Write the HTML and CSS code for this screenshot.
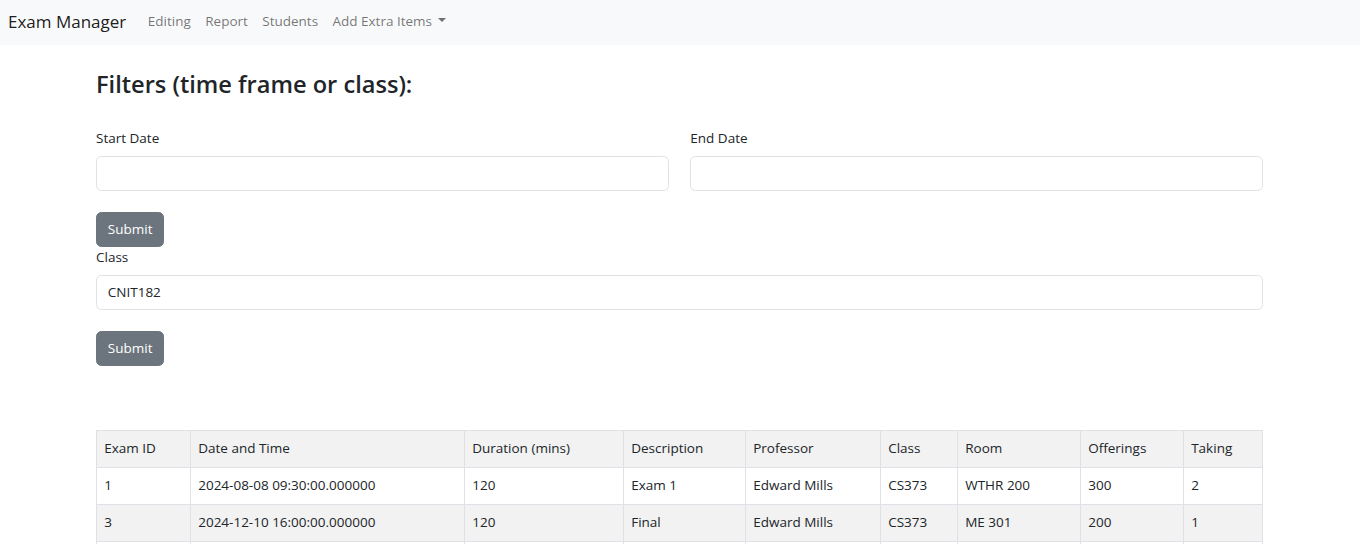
FILE: index.html
```html
<!DOCTYPE html>
<html lang="en">
<head>
<meta charset="utf-8">
<title>Exam Manager</title>
<link rel="stylesheet" href="styles.css">
</head>
<body>
<nav class="navbar">
  <a class="brand" href="#">Exam Manager</a>
  <ul class="nav">
    <li><a class="nav-link" href="#">Editing</a></li>
    <li><a class="nav-link" href="#">Report</a></li>
    <li><a class="nav-link" href="#">Students</a></li>
    <li><a class="nav-link dropdown" href="#">Add Extra Items<span class="caret"></span></a></li>
  </ul>
</nav>
<main class="container">
  <h3 class="title">Filters (time frame or class):</h3>
  <form class="form">
    <div class="row">
      <div class="field">
        <label class="label">Start Date</label>
        <input class="input" type="text">
      </div>
      <div class="field">
        <label class="label">End Date</label>
        <input class="input" type="text">
      </div>
    </div>
    <button class="btn" type="button">Submit</button>
  </form>
  <form class="form">
    <div class="field">
      <label class="label">Class</label>
      <input class="input" type="text" value="CNIT182">
    </div>
    <button class="btn" type="button">Submit</button>
  </form>
  <table class="table">
    <thead>
      <tr>
        <th class="c1">Exam ID</th>
        <th class="c2">Date and Time</th>
        <th class="c3">Duration (mins)</th>
        <th class="c4">Description</th>
        <th class="c5">Professor</th>
        <th class="c6">Class</th>
        <th class="c7">Room</th>
        <th class="c8">Offerings</th>
        <th class="c9">Taking</th>
      </tr>
    </thead>
    <tbody>
      <tr>
        <td>1</td><td>2024-08-08 09:30:00.000000</td><td>120</td><td>Exam 1</td><td>Edward Mills</td><td>CS373</td><td>WTHR 200</td><td>300</td><td>2</td>
      </tr>
      <tr class="stripe">
        <td>3</td><td>2024-12-10 16:00:00.000000</td><td>120</td><td>Final</td><td>Edward Mills</td><td>CS373</td><td>ME 301</td><td>200</td><td>1</td>
      </tr>
      <tr class="empty">
        <td></td><td></td><td></td><td></td><td></td><td></td><td></td><td></td><td></td>
      </tr>
    </tbody>
  </table>
</main>
</body>
</html>
```

FILE: styles.css
```css
* { box-sizing: border-box; }
html, body { margin: 0; padding: 0; }
body {
  font-family: "Open Sans", "Noto Sans", sans-serif;
  font-size: 13.5px;
  line-height: 21.6px;
  color: #212529;
  background: #fff;
}
.navbar {
  display: flex;
  align-items: center;
  height: 45px;
  padding: 0 8px 2px;
  background: #f8f9fa;
}
.brand {
  font-size: 17px;
  color: rgba(0,0,0,.9);
  text-decoration: none;
  margin-right: 14.4px;
  line-height: 27px;
}
.nav {
  display: flex;
  list-style: none;
  margin: 0;
  padding: 0;
}
.nav-link {
  display: block;
  padding: 7.2px 7.2px;
  color: rgba(0,0,0,.55);
  text-decoration: none;
}
.caret {
  display: inline-block;
  margin-left: 6px;
  vertical-align: 3.5px;
  border-top: 4.3px solid;
  border-right: 4.3px solid transparent;
  border-left: 4.3px solid transparent;
}
.container {
  max-width: 1188px;
  margin: 0 auto;
  padding: 24px 11px 0 10px;
}
.title {
  margin: 0 0 28.5px;
  font-size: 23.6px;
  font-weight: 600;
  line-height: 30.2px;
}
.row {
  display: grid;
  grid-template-columns: 1fr 1fr;
  column-gap: 21.6px;
}
.field { display: flex; flex-direction: column; margin-bottom: 21.6px; }
.label { margin-bottom: 7px; }
.input {
  font: inherit;
  color: #212529;
  height: 34.4px;
  padding: 5.4px 10.8px;
  border: 1px solid #dee2e6;
  border-radius: 5.4px;
  background: #fff;
}
.btn {
  display: block;
  font: inherit;
  color: #fff;
  background: #6c757d;
  border: 1px solid #6c757d;
  border-radius: 5.4px;
  padding: 5.4px 10.8px;
  line-height: 21.6px;
}
.table {
  margin-top: 64.5px;
  width: 100%;
  border-collapse: collapse;
}
.table th, .table td {
  border: 1px solid #dee2e6;
  padding: 7.2px 7.2px;
  text-align: left;
  font-weight: 400;
  white-space: nowrap;
}
.table thead th { background: #f2f2f2; }
.table .stripe td { background: #f2f2f2; }
.table .empty td { height: 37px; }
.c1 { width: 94px; }
.c2 { width: 274px; }
.c3 { width: 159px; }
.c4 { width: 122px; }
.c5 { width: 135px; }
.c6 { width: 77px; }
.c7 { width: 123px; }
.c8 { width: 103px; }
```
